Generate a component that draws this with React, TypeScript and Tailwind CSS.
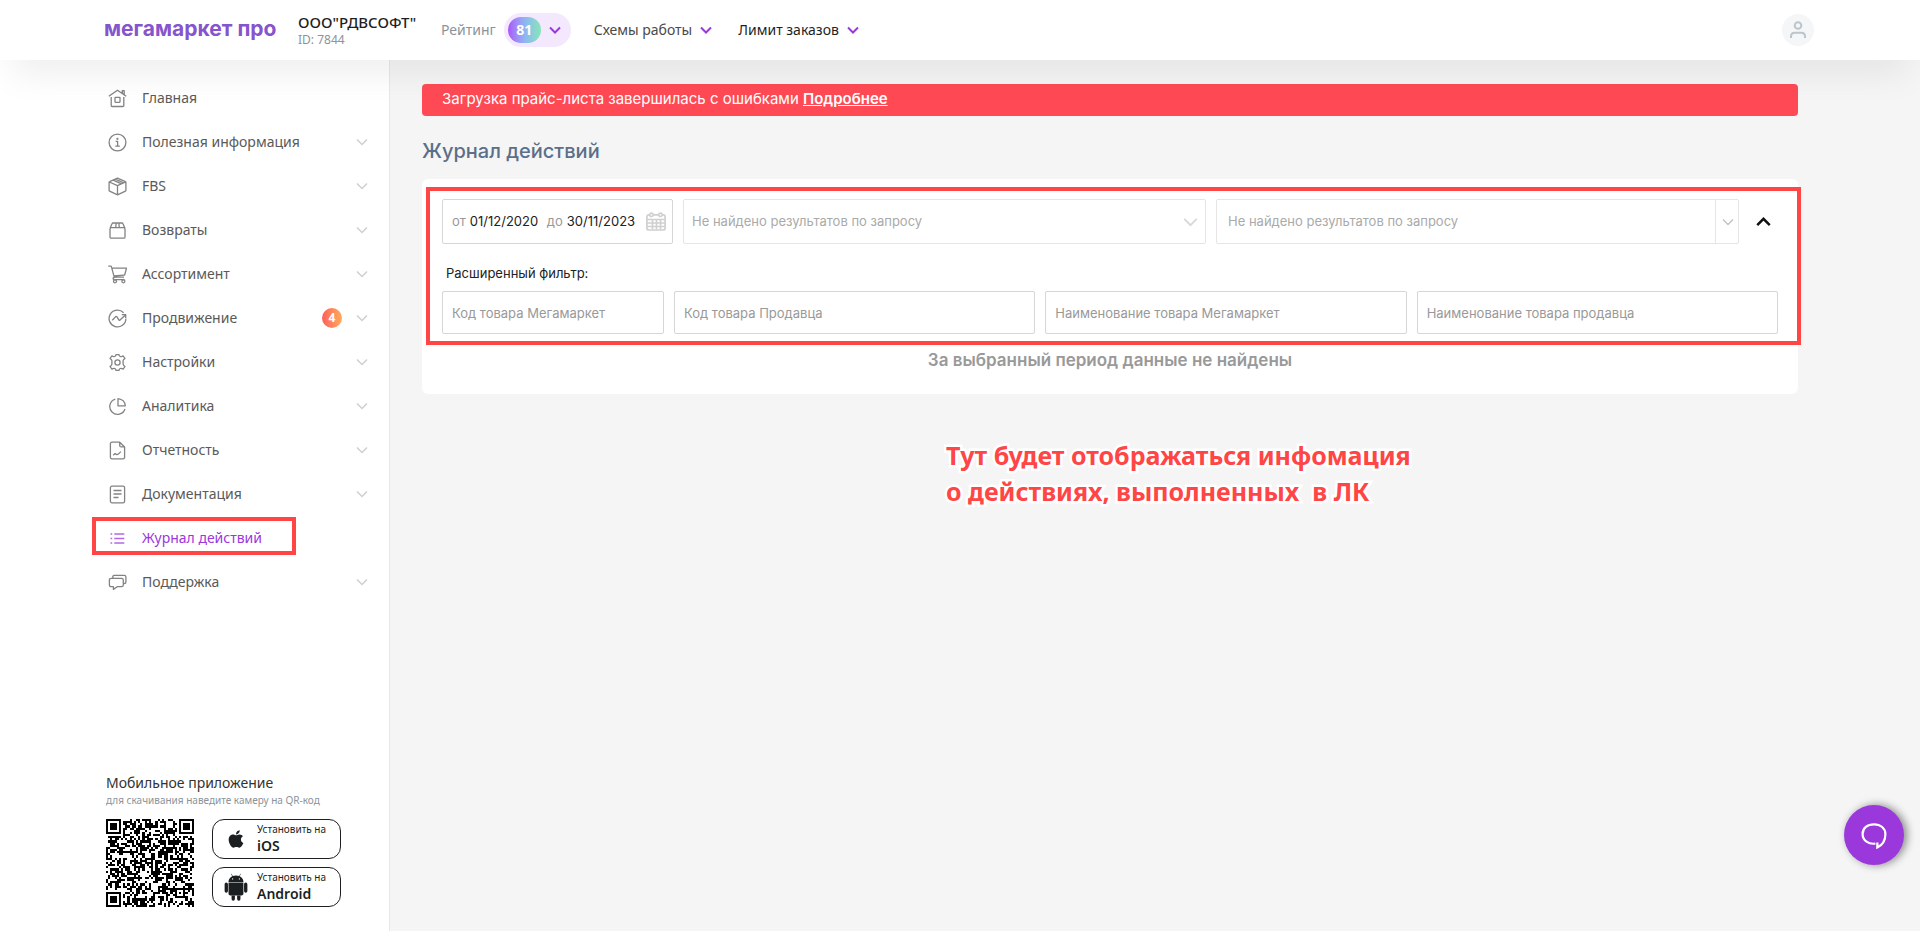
import React from 'react';
import { FaApple } from 'react-icons/fa';
import { DiAndroid } from 'react-icons/di';

interface ChevronProps {
  className?: string;
}

interface MenuItem {
  label: string;
  icon: React.ReactNode;
  expandable?: boolean;
  active?: boolean;
  badge?: number;
}

const Chevron: React.FC<ChevronProps> = ({ className }) => (
  <svg viewBox="0 0 12 8" fill="none" className={className} aria-hidden="true">
    <path d="M1 1.5L6 6.5L11 1.5" stroke="currentColor" />
  </svg>
);

const menu: MenuItem[] = [
  {
    label: 'Главная',
    icon: (
      <>
        <path d="M.8 7.3L9.5 1.2l8.7 6.1M14.3 4.2V1.6h1.9v3.8M3.2 8v8.6q0 .9.9.9h10.8q.9 0 .9-.9V8" />
        <rect x="7" y="8.3" width="5" height="5" rx=".5" />
      </>
    ),
  },
  {
    label: 'Полезная информация',
    expandable: true,
    icon: (
      <>
        <circle cx="9.5" cy="9.5" r="8.4" />
        <path d="M7.7 8.3h1.9v4.8M7.3 13.2h4.5" />
        <circle cx="9.4" cy="5.8" r=".5" fill="currentColor" />
      </>
    ),
  },
  {
    label: 'FBS',
    expandable: true,
    icon: (
      <path d="M9.5 1.1L17.4 4.6q.5.2.5.8v8q0 .6-.5.8L9.5 17.9L1.6 14.2q-.5-.2-.5-.8v-8q0-.6.5-.8ZM1.3 5L9.5 8.7L17.7 5M9.5 8.7v9.2M5.2 3.2l8.3 3.7M7.3 2.2l8.3 3.6" />
    ),
  },
  {
    label: 'Возвраты',
    expandable: true,
    icon: (
      <>
        <rect x="2" y="6.6" width="15" height="10.6" rx="1.3" />
        <path d="M2.2 7L4 2.8Q4.3 2 5.2 2h8.6q.9 0 1.2.8L16.8 7M7.7 6.5L8.2 2M11.3 6.5L10.8 2" />
      </>
    ),
  },
  {
    label: 'Ассортимент',
    expandable: true,
    icon: (
      <>
        <path d="M.3 1.2h2.3q.7 0 .9.7L6 11.4q.2.7 1 .7h9M4.2 3.2h14.3l-1.7 6.3q-.2.7-.9.7L6 11M6.9 12.3q-1.8 0-1.8 1.2t1.4 1.2h10" />
        <circle cx="7" cy="16.3" r="1.5" />
        <circle cx="15.4" cy="16.3" r="1.5" />
      </>
    ),
  },
  {
    label: 'Продвижение',
    expandable: true,
    badge: 4,
    icon: (
      <>
        <path d="M15.6 3.7A8.4 8.4 0 1 0 17.9 9.7" />
        <path d="M4.3 11.3l3.4-3.7q.6-.5 1.1 0l2.2 3.5q.5.6 1 0L17.5 6M13.8 5.7h3.9v3.6" />
      </>
    ),
  },
  {
    label: 'Настройки',
    expandable: true,
    icon: (
      <>
        <path d="M7.2 3.3Q8 2.8 8 1.6h3q0 1.2.8 1.7t2.2 0l1.1-.5l1.9 2.7l-1 .8q-.9.8-.9 1.6v3.2q0 .8.9 1.6l1 .8l-1.9 2.7l-1.1-.5q-1.4-.5-2.2 0t-.8 1.7H8q0-1.2-.8-1.7t-2.2 0l-1.1.5L2 13.5l1-.8q.9-.8.9-1.6V7.9q0-.8-.9-1.6l-1-.8l1.9-2.7l1.1.5q1.4.5 2.2 0Z" />
        <circle cx="9.5" cy="9.5" r="2.6" />
      </>
    ),
  },
  {
    label: 'Аналитика',
    expandable: true,
    icon: (
      <>
        <path d="M7.3 2.1A7.8 7.8 0 1 0 17 12" />
        <path d="M10 1.6v7.2h7.3Q17 2.6 10 1.6Z" />
      </>
    ),
  },
  {
    label: 'Отчетность',
    expandable: true,
    icon: (
      <>
        <path d="M11.7 1.2H4q-1.6 0-1.6 1.6v13.4q0 1.6 1.6 1.6h11q1.6 0 1.6-1.6V6ZM11.7 1.2v3.2q0 1.5 1.5 1.5h3.4" />
        <path d="M5.2 14.2l1.8-1.6l1.7 1l1.6-.5l2.5-2.5" />
      </>
    ),
  },
  {
    label: 'Документация',
    expandable: true,
    icon: (
      <>
        <rect x="2.4" y="1.2" width="14.2" height="16.6" rx="1.6" />
        <path d="M5.5 5.5h8M5.5 9h8M5.5 12.5h5" />
      </>
    ),
  },
  {
    label: 'Журнал действий',
    active: true,
    icon: <path d="M2.5 5h1.7M6.3 5h10M2.5 9.5h1.7M6.3 9.5h10M2.5 14h1.7M6.3 14h10" strokeWidth="1.6" />,
  },
  {
    label: 'Поддержка',
    expandable: true,
    icon: (
      <>
        <path d="M4.8 5.3V3.9q0-1.6 1.6-1.6h9.9q1.6 0 1.6 1.6v5q0 1.6-1.6 1.6h-.8" />
        <path d="M3.1 5.3h10.5q1.7 0 1.7 1.6v5.2q0 1.6-1.7 1.6H9.2L5.4 16.4v-2.7H3.1q-1.7 0-1.7-1.6V6.9q0-1.6 1.7-1.6Z" />
      </>
    ),
  },
];

const QR_SIZE = 41;

// Three finder squares in the corners, a small alignment square, noise elsewhere
const isDark = (x: number, y: number): boolean => {
  const finders = [
    [0, 0],
    [QR_SIZE - 7, 0],
    [0, QR_SIZE - 7],
  ];
  for (const [fx, fy] of finders) {
    if (x >= fx - 1 && x <= fx + 7 && y >= fy - 1 && y <= fy + 7) {
      const ring = Math.max(Math.abs(x - fx - 3), Math.abs(y - fy - 3));
      return ring !== 2 && ring !== 4;
    }
  }
  const align = Math.max(Math.abs(x - 34), Math.abs(y - 34));
  if (align <= 2) {
    return align !== 1;
  }
  const hash = Math.sin(x * 127.1 + y * 311.7) * 43758.5453;
  return hash - Math.floor(hash) > 0.46;
};

const qrPath = Array.from({ length: QR_SIZE * QR_SIZE }, (_, i) => [i % QR_SIZE, Math.floor(i / QR_SIZE)])
  .filter(([x, y]) => isDark(x, y))
  .map(([x, y]) => `M${x} ${y}h1v1h-1z`)
  .join('');

const Header: React.FC = () => (
  <header className="relative z-10 flex h-15 items-center bg-white pr-[106px] pl-[104px] text-sm shadow-[0_24px_36px_-12px_rgba(0,0,0,0.08)]">
    <a href="#" className="w-[194px] pb-0.5 font-['Inter'] text-[21px] leading-6 font-bold text-[#8654cc]">
      мегамаркет про
    </a>
    <div className="w-[143px]">
      <div className="text-[15px] leading-5 font-medium text-[#1f1f1f]">ООО"РДВСОФТ"</div>
      <div className="text-xs leading-4 text-[#8b939b]">ID: 7844</div>
    </div>
    <span className="mr-2 text-[#8b939b]">Рейтинг</span>
    <button className="flex h-[34px] items-center gap-2 rounded-full bg-[#f3e8fd] pr-[10px] pl-1 text-[#9b38dc]">
      <span className="flex h-[26px] w-[33px] items-center justify-center rounded-full bg-linear-to-r from-[#a855f7] via-[#8fb4f5] to-[#86e6b4] font-bold text-white">
        81
      </span>
      <Chevron className="h-2 w-3 stroke-2" />
    </button>
    <button className="ml-[23px] flex items-center gap-2 text-[#4a4a4a]">
      Схемы работы
      <Chevron className="h-2 w-3 stroke-2 text-[#9b38dc]" />
    </button>
    <button className="ml-[26px] flex items-center gap-2 text-[#1f1f1f]">
      Лимит заказов
      <Chevron className="h-2 w-3 stroke-2 text-[#9b38dc]" />
    </button>
    <button
      aria-label="Профиль"
      className="ml-auto flex size-8 items-center justify-center rounded-full bg-[#f4f6f8] text-[#bcc5cc]"
    >
      <svg viewBox="0 0 18 18" fill="none" stroke="currentColor" strokeWidth="2" className="size-[18px]">
        <circle cx="9" cy="4.5" r="3.3" />
        <path d="M2 17v-1.5q0-3.7 3.7-3.7h6.6q3.7 0 3.7 3.7V17" />
      </svg>
    </button>
  </header>
);

const Sidebar: React.FC = () => (
  <aside className="flex w-[390px] shrink-0 flex-col border-r border-[#e8e8e8] bg-white pt-4 pb-6 pl-[106px]">
    <nav>
      <ul>
        {menu.map((item) => (
          <li key={item.label} className="relative">
            <a
              href="#"
              className={`flex h-11 items-center pr-[21px] pl-[2px] text-sm ${item.active ? 'text-[#9b38dc]' : 'text-[#5a5a5a]'}`}
            >
              <svg
                viewBox="0 0 19 19"
                fill="none"
                stroke="currentColor"
                strokeWidth="1.3"
                strokeLinejoin="round"
                className="mr-[15px] size-[19px] opacity-75"
              >
                {item.icon}
              </svg>
              <span>{item.label}</span>
              {item.badge && (
                <span className="mr-[14px] ml-auto flex size-5 items-center justify-center rounded-full bg-linear-to-r from-[#ff5c5c] to-[#ffab5c] text-xs font-bold text-white">
                  {item.badge}
                </span>
              )}
              {item.expandable && (
                <Chevron className={`h-2 w-3 stroke-[1.5] text-[#cfcfcf] ${item.badge ? '' : 'ml-auto'}`} />
              )}
            </a>
            {item.active && (
              <div className="pointer-events-none absolute top-[1px] -left-[14px] h-[38px] w-[204px] border-4 border-[#ff4545]" />
            )}
          </li>
        ))}
      </ul>
    </nav>
    <div className="mt-auto">
      <div className="text-sm leading-5 text-[#333]">Мобильное приложение</div>
      <div className="text-[10px] leading-[14px] text-[#8b939b]">для скачивания наведите камеру на QR-код</div>
      <div className="mt-3 flex gap-[18px]">
        <svg viewBox={`0 0 ${QR_SIZE} ${QR_SIZE}`} shapeRendering="crispEdges" className="size-[88px]">
          <path d={qrPath} fill="#000" />
        </svg>
        <div className="flex flex-col gap-2">
          <StoreLink name="iOS" icon={<FaApple size={20} />} />
          <StoreLink name="Android" icon={<DiAndroid size={28} />} />
        </div>
      </div>
    </div>
  </aside>
);

const StoreLink: React.FC<{ name: string; icon: React.ReactNode }> = ({ name, icon }) => (
  <a href="#" className="flex h-10 w-[129px] items-center rounded-xl border border-[#1b1f22] pl-2 text-[#1b1f22]">
    <span className="mr-[6px] flex w-[30px] justify-center">{icon}</span>
    <span className="flex flex-col pb-0.5">
      <span className="text-[10px] leading-4">Установить на</span>
      <span className="text-sm leading-[18px] font-semibold">{name}</span>
    </span>
  </a>
);

const CalendarIcon: React.FC = () => (
  <svg viewBox="0 0 20 19" fill="none" stroke="currentColor" strokeWidth="1.7" className="h-[19px] w-5 text-[#d0d0d0]">
    <rect x=".9" y="2.8" width="18.2" height="15.2" rx="2" />
    <path d="M1 7.5h18M1 11h18M1 14.5h18M6.5 7.5v10M10.5 7.5v10M14.5 7.5v10" />
    <circle cx="5.5" cy="2.8" r="1.7" fill="#fff" />
    <circle cx="14.5" cy="2.8" r="1.7" fill="#fff" />
  </svg>
);

const Filters: React.FC = () => (
  <div className="relative text-[13px]">
    <div className="flex items-center gap-[10px]">
      <div className="flex h-[45px] w-[231px] shrink-0 items-center rounded-xs border border-[#d6d6d6] pl-[9px] text-[#999]">
        <label htmlFor="from">от</label>
        <input id="from" defaultValue="01/12/2020" className="mr-1 ml-1 w-[73px] text-[#222] outline-none" />
        <label htmlFor="to">до</label>
        <input id="to" defaultValue="30/11/2023" className="ml-1 w-[79px] text-[#222] outline-none" />
        <CalendarIcon />
      </div>
      <div className="relative flex-1">
        <select
          aria-label="Раздел"
          disabled
          className="block h-[45px] w-full appearance-none rounded-xs border border-[#e5e5e5] pl-2 text-[#aaa] opacity-100"
        >
          <option>Не найдено результатов по запросу</option>
        </select>
        <Chevron className="pointer-events-none absolute top-[18px] right-2 h-[10px] w-[15px] stroke-[1.5] text-[#d8d8d8]" />
      </div>
      <div className="relative flex-1">
        <select
          aria-label="Действие"
          disabled
          className="block h-[45px] w-full appearance-none rounded-xs border border-[#e5e5e5] pl-[11px] text-[#aaa] opacity-100"
        >
          <option>Не найдено результатов по запросу</option>
        </select>
        <span className="pointer-events-none absolute inset-y-0 right-0 flex w-6 items-center justify-center border-l border-[#e5e5e5]">
          <Chevron className="h-2 w-3 stroke-[1.5] text-[#c4c4c4]" />
        </span>
      </div>
      <button aria-label="Свернуть фильтр" className="flex h-[45px] w-[29px] items-center justify-end pr-[7px] text-[#111]">
        <Chevron className="h-[10px] w-[15px] rotate-180 stroke-2" />
      </button>
    </div>
    <div className="mt-[19px] mb-2 pl-1 leading-5 text-[#222]">Расширенный фильтр:</div>
    <div className="flex gap-[10px]">
      <input
        aria-label="Код товара Мегамаркет"
        placeholder="Код товара Мегамаркет"
        className="h-[43px] w-[222px] rounded-xs border border-[#d6d6d6] px-[9px] placeholder:text-[#999]"
      />
      {['Код товара Продавца', 'Наименование товара Мегамаркет', 'Наименование товара продавца'].map((label) => (
        <input
          key={label}
          aria-label={label}
          placeholder={label}
          className="h-[43px] min-w-0 flex-1 rounded-xs border border-[#d6d6d6] px-[9px] placeholder:text-[#999]"
        />
      ))}
    </div>
    <div className="pointer-events-none absolute -top-3 -right-[23px] -bottom-[11px] -left-4 border-4 border-[#ff4545]" />
  </div>
);

const App: React.FC = () => {
  return (
    <div className="flex min-h-screen flex-col bg-[#f5f5f5] font-['Noto_Sans',sans-serif]">
      <Header />
      <div className="flex flex-1">
        <Sidebar />
        <main className="min-w-0 flex-1 pt-6 pr-[122px] pl-8 font-['Inter',sans-serif]">
          <div className="h-8 rounded-sm bg-[#ff4a55] pl-5 text-[15px] leading-[30px] text-white">
            Загрузка прайс-листа завершилась с ошибками{' '}
            <a href="#" className="font-semibold underline">
              Подробнее
            </a>
          </div>
          <h1 className="mt-5 text-xl leading-[30px] font-medium text-[#5b6f88]">Журнал действий</h1>
          <section className="mt-[13px] rounded-md bg-white px-5 pt-5 pb-[18px]">
            <Filters />
            <p className="mt-[10px] text-center text-[17px] leading-8 font-semibold text-[#999]">
              За выбранный период данные не найдены
            </p>
          </section>
          <p className="mt-[43px] ml-[524px] font-['Noto_Sans'] text-[25px] leading-9 font-bold whitespace-pre-line text-[#ff4545] [paint-order:stroke_fill] [-webkit-text-stroke:5px_white]">
            {'Тут будет отображаться инфомация\nо действиях, выполненных \u00a0в ЛК'}
          </p>
        </main>
      </div>
      <button
        aria-label="Открыть чат"
        className="fixed right-4 bottom-[66px] flex size-15 items-center justify-center rounded-full bg-[#9b38dc] shadow-[3px_0_8px_rgba(0,0,0,0.45)]"
      >
        <svg viewBox="0 0 28 28" fill="none" stroke="#fff" strokeWidth="2.2" className="size-7">
          <path d="M15.4 22.6C8.8 23.5 2.6 19.6 2.6 12.9C2.6 7 7.5 3.3 14 3.3S25.4 7.2 25.4 13.2C25.4 19.5 22 24.2 17.3 26.4L17.4 21.6" />
        </svg>
      </button>
    </div>
  );
};

export default App;
